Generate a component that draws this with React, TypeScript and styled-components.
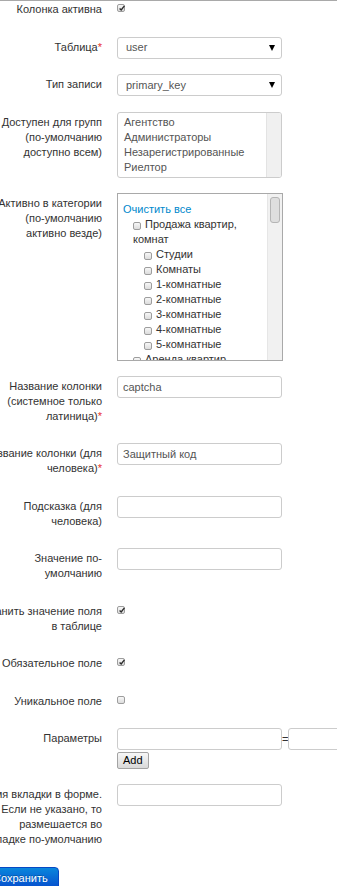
import React from 'react'
import styled, { createGlobalStyle } from 'styled-components'

const GlobalStyle = createGlobalStyle`
	html, body {
		margin: 0;
		padding: 0;
		overflow: hidden;
		background: #fff;
	}
	body {
		font-family: 'Liberation Sans', Arial, sans-serif;
		font-size: 11px;
		line-height: 15px;
		color: #333;
	}
`

const TopRule = styled.div`
	height: 1px;
	background: #a9a9a9;
`

const Form = styled.form`
	margin: -2px 0 0 -58px;
`

const Group = styled.div`
	display: grid;
	grid-template-columns: 160px auto;
	column-gap: 15px;
	align-items: start;
	margin-bottom: 15px;
`

const Label = styled.label`
	display: block;
	text-align: right;
	white-space: nowrap;
	padding: 3px 0 4.5px;
	line-height: 15px;
	color: #333;
`

const Req = styled.span`
	color: #e9322d;
`

const Controls = styled.div<{ $check?: boolean }>`
	padding-top: ${(p) => (p.$check ? '5px' : '0')};
	min-width: 0;
`

const Box = styled.span<{ $inline?: boolean }>`
	display: ${(p) => (p.$inline ? 'inline-block' : 'block')};
	width: 8px;
	height: 8px;
	box-sizing: border-box;
	border: 1px solid #9d9d9d;
	border-radius: 2px;
	background: linear-gradient(#f7f7f7, #dcdcdc);
	vertical-align: -2px;
	margin-right: ${(p) => (p.$inline ? '4px' : '0')};
	svg {
		display: block;
		margin: -1px 0 0 0;
	}
`

const SelectWrap = styled.div`
	position: relative;
	width: 165px;
	&::after {
		content: '';
		position: absolute;
		right: 7px;
		top: 50%;
		margin-top: -3px;
		border-left: 3px solid transparent;
		border-right: 3px solid transparent;
		border-top: 6px solid #000;
		pointer-events: none;
	}
`

const Select = styled.select`
	appearance: none;
	display: block;
	width: 100%;
	height: 22px;
	box-sizing: border-box;
	margin: 0;
	border: 1px solid #ccc;
	border-radius: 3px;
	background: #fff;
	padding: 0 20px 0 8px;
	font: inherit;
	color: #555;
	outline: none;
`

const TextInput = styled.input`
	display: block;
	flex: none;
	width: 165px;
	height: 22px;
	box-sizing: border-box;
	margin: 0;
	border: 1px solid #ccc;
	border-radius: 3px;
	padding: 0 5px;
	font: inherit;
	color: #555;
	background: #fff;
	outline: none;
`

const ListBox = styled.div`
	display: flex;
	width: 165px;
	height: 66px;
	box-sizing: border-box;
	border: 1px solid #ccc;
	border-radius: 3px;
	overflow: hidden;
`

const ListItems = styled.ul`
	flex: 1;
	list-style: none;
	margin: 0;
	padding: 2px 6px;
	color: #555;
	white-space: nowrap;
`

const ListTrack = styled.div`
	width: 14px;
	background: #f0f0f0;
	border-left: 1px solid #e3e3e3;
`

const TreeBox = styled.div`
	display: flex;
	width: 166px;
	height: 168px;
	box-sizing: border-box;
	border: 1px solid #a9a9a9;
	overflow: hidden;
`

const TreeBody = styled.div`
	flex: 1;
	overflow: hidden;
	padding: 8px 0 0 5px;
`

const ClearLink = styled.a`
	display: block;
	color: #0088cc;
	text-decoration: none;
`

const TreeItem = styled.div<{ $level: number }>`
	padding-left: ${(p) => (p.$level === 1 ? 10 : 21)}px;
`

const TreeTrack = styled.div`
	width: 15px;
	box-sizing: border-box;
	padding: 3px 2px;
	background: #f1f1f1;
	border-left: 1px solid #e6e6e6;
`

const TreeThumb = styled.div`
	height: 26px;
	box-sizing: border-box;
	border: 1px solid #b5b5b5;
	border-radius: 3px;
	background: #dedede;
`

const ParamLine = styled.div`
	display: flex;
	align-items: center;
	white-space: nowrap;
`

const Eq = styled.span`
	flex: none;
	width: 6px;
	text-align: center;
	color: #333;
`

const AddButton = styled.button`
	display: block;
	margin-top: 2px;
	height: 17px;
	padding: 0 5px;
	font: inherit;
	line-height: 15px;
	color: #000;
	border: 1px solid #a3a3a3;
	border-radius: 2px;
	background: linear-gradient(#f7f7f7, #d9d9d9);
`

const Actions = styled.div`
	padding-left: 40px;
`

const SaveButton = styled.button`
	height: 24px;
	padding: 0 10px;
	font: inherit;
	color: #fff;
	border: 1px solid #0648c4;
	border-radius: 4px;
	background: linear-gradient(#0a86dc, #0548cc);
	text-shadow: 0 -1px 0 rgba(0, 0, 0, 0.25);
`

const CheckBox: React.FC<{ checked?: boolean; inline?: boolean }> = ({ checked, inline }) => (
	<Box $inline={inline}>
		{checked && (
			<svg width="8" height="8" viewBox="0 0 8 8">
				<path d="M1.6 4.4 L3.2 6 L6.4 1.9" fill="none" stroke="#2d2d2d" strokeWidth="1.4" />
			</svg>
		)}
	</Box>
)

const Field: React.FC<{ label: React.ReactNode; check?: boolean; children: React.ReactNode }> = ({
	label,
	check,
	children,
}) => (
	<Group>
		<Label>{label}</Label>
		<Controls $check={check}>{children}</Controls>
	</Group>
)

const groups = ['Агентство', 'Администраторы', 'Незарегистрированные', 'Риелтор']
const rooms = ['Студии', 'Комнаты', '1-комнатные', '2-комнатные', '3-комнатные', '4-комнатные', '5-комнатные']

export default function App() {
	return (
		<>
			<GlobalStyle />
			<TopRule />
			<Form onSubmit={(e) => e.preventDefault()}>
				<Field label="Колонка активна" check>
					<CheckBox checked />
				</Field>
				<Field
					label={
						<>
							Таблица<Req>*</Req>
						</>
					}
				>
					<SelectWrap>
						<Select defaultValue="user">
							<option value="user">user</option>
						</Select>
					</SelectWrap>
				</Field>
				<Field label="Тип записи">
					<SelectWrap>
						<Select defaultValue="primary_key">
							<option value="primary_key">primary_key</option>
						</Select>
					</SelectWrap>
				</Field>
				<Field
					label={
						<>
							Доступен для групп
							<br />
							(по-умолчанию
							<br />
							доступно всем)
						</>
					}
				>
					<ListBox>
						<ListItems>
							{groups.map((g) => (
								<li key={g}>{g}</li>
							))}
						</ListItems>
						<ListTrack />
					</ListBox>
				</Field>
				<Field
					label={
						<>
							Активно в категории
							<br />
							(по-умолчанию
							<br />
							активно везде)
						</>
					}
				>
					<TreeBox>
						<TreeBody>
							<ClearLink href="#">Очистить все</ClearLink>
							<TreeItem $level={1}>
								<CheckBox inline />
								Продажа квартир,
								<br />
								комнат
							</TreeItem>
							{rooms.map((r) => (
								<TreeItem $level={2} key={r}>
									<CheckBox inline />
									{r}
								</TreeItem>
							))}
							<TreeItem $level={1}>
								<CheckBox inline />
								Аренда квартир, комнат
							</TreeItem>
						</TreeBody>
						<TreeTrack>
							<TreeThumb />
						</TreeTrack>
					</TreeBox>
				</Field>
				<Field
					label={
						<>
							Название колонки
							<br />
							(системное только
							<br />
							латиница)<Req>*</Req>
						</>
					}
				>
					<TextInput defaultValue="captcha" />
				</Field>
				<Field
					label={
						<>
							Название колонки (для
							<br />
							человека)<Req>*</Req>
						</>
					}
				>
					<TextInput defaultValue="Защитный код" />
				</Field>
				<Field
					label={
						<>
							Подсказка (для
							<br />
							человека)
						</>
					}
				>
					<TextInput />
				</Field>
				<Field
					label={
						<>
							Значение по-
							<br />
							умолчанию
						</>
					}
				>
					<TextInput />
				</Field>
				<Field
					check
					label={
						<>
							Хранить значение поля
							<br />в таблице
						</>
					}
				>
					<CheckBox checked />
				</Field>
				<Field label="Обязательное поле" check>
					<CheckBox checked />
				</Field>
				<Field label="Уникальное поле" check>
					<CheckBox />
				</Field>
				<Field label="Параметры">
					<ParamLine>
						<TextInput />
						<Eq>=</Eq>
						<TextInput />
					</ParamLine>
					<AddButton type="button">Add</AddButton>
				</Field>
				<Field
					label={
						<>
							Имя вкладки в форме.
							<br />
							Если не указано, то
							<br />
							размешается во
							<br />
							вкладке по-умолчанию
						</>
					}
				>
					<TextInput />
				</Field>
				<Actions>
					<SaveButton type="submit">Сохранить</SaveButton>
				</Actions>
			</Form>
		</>
	)
}
